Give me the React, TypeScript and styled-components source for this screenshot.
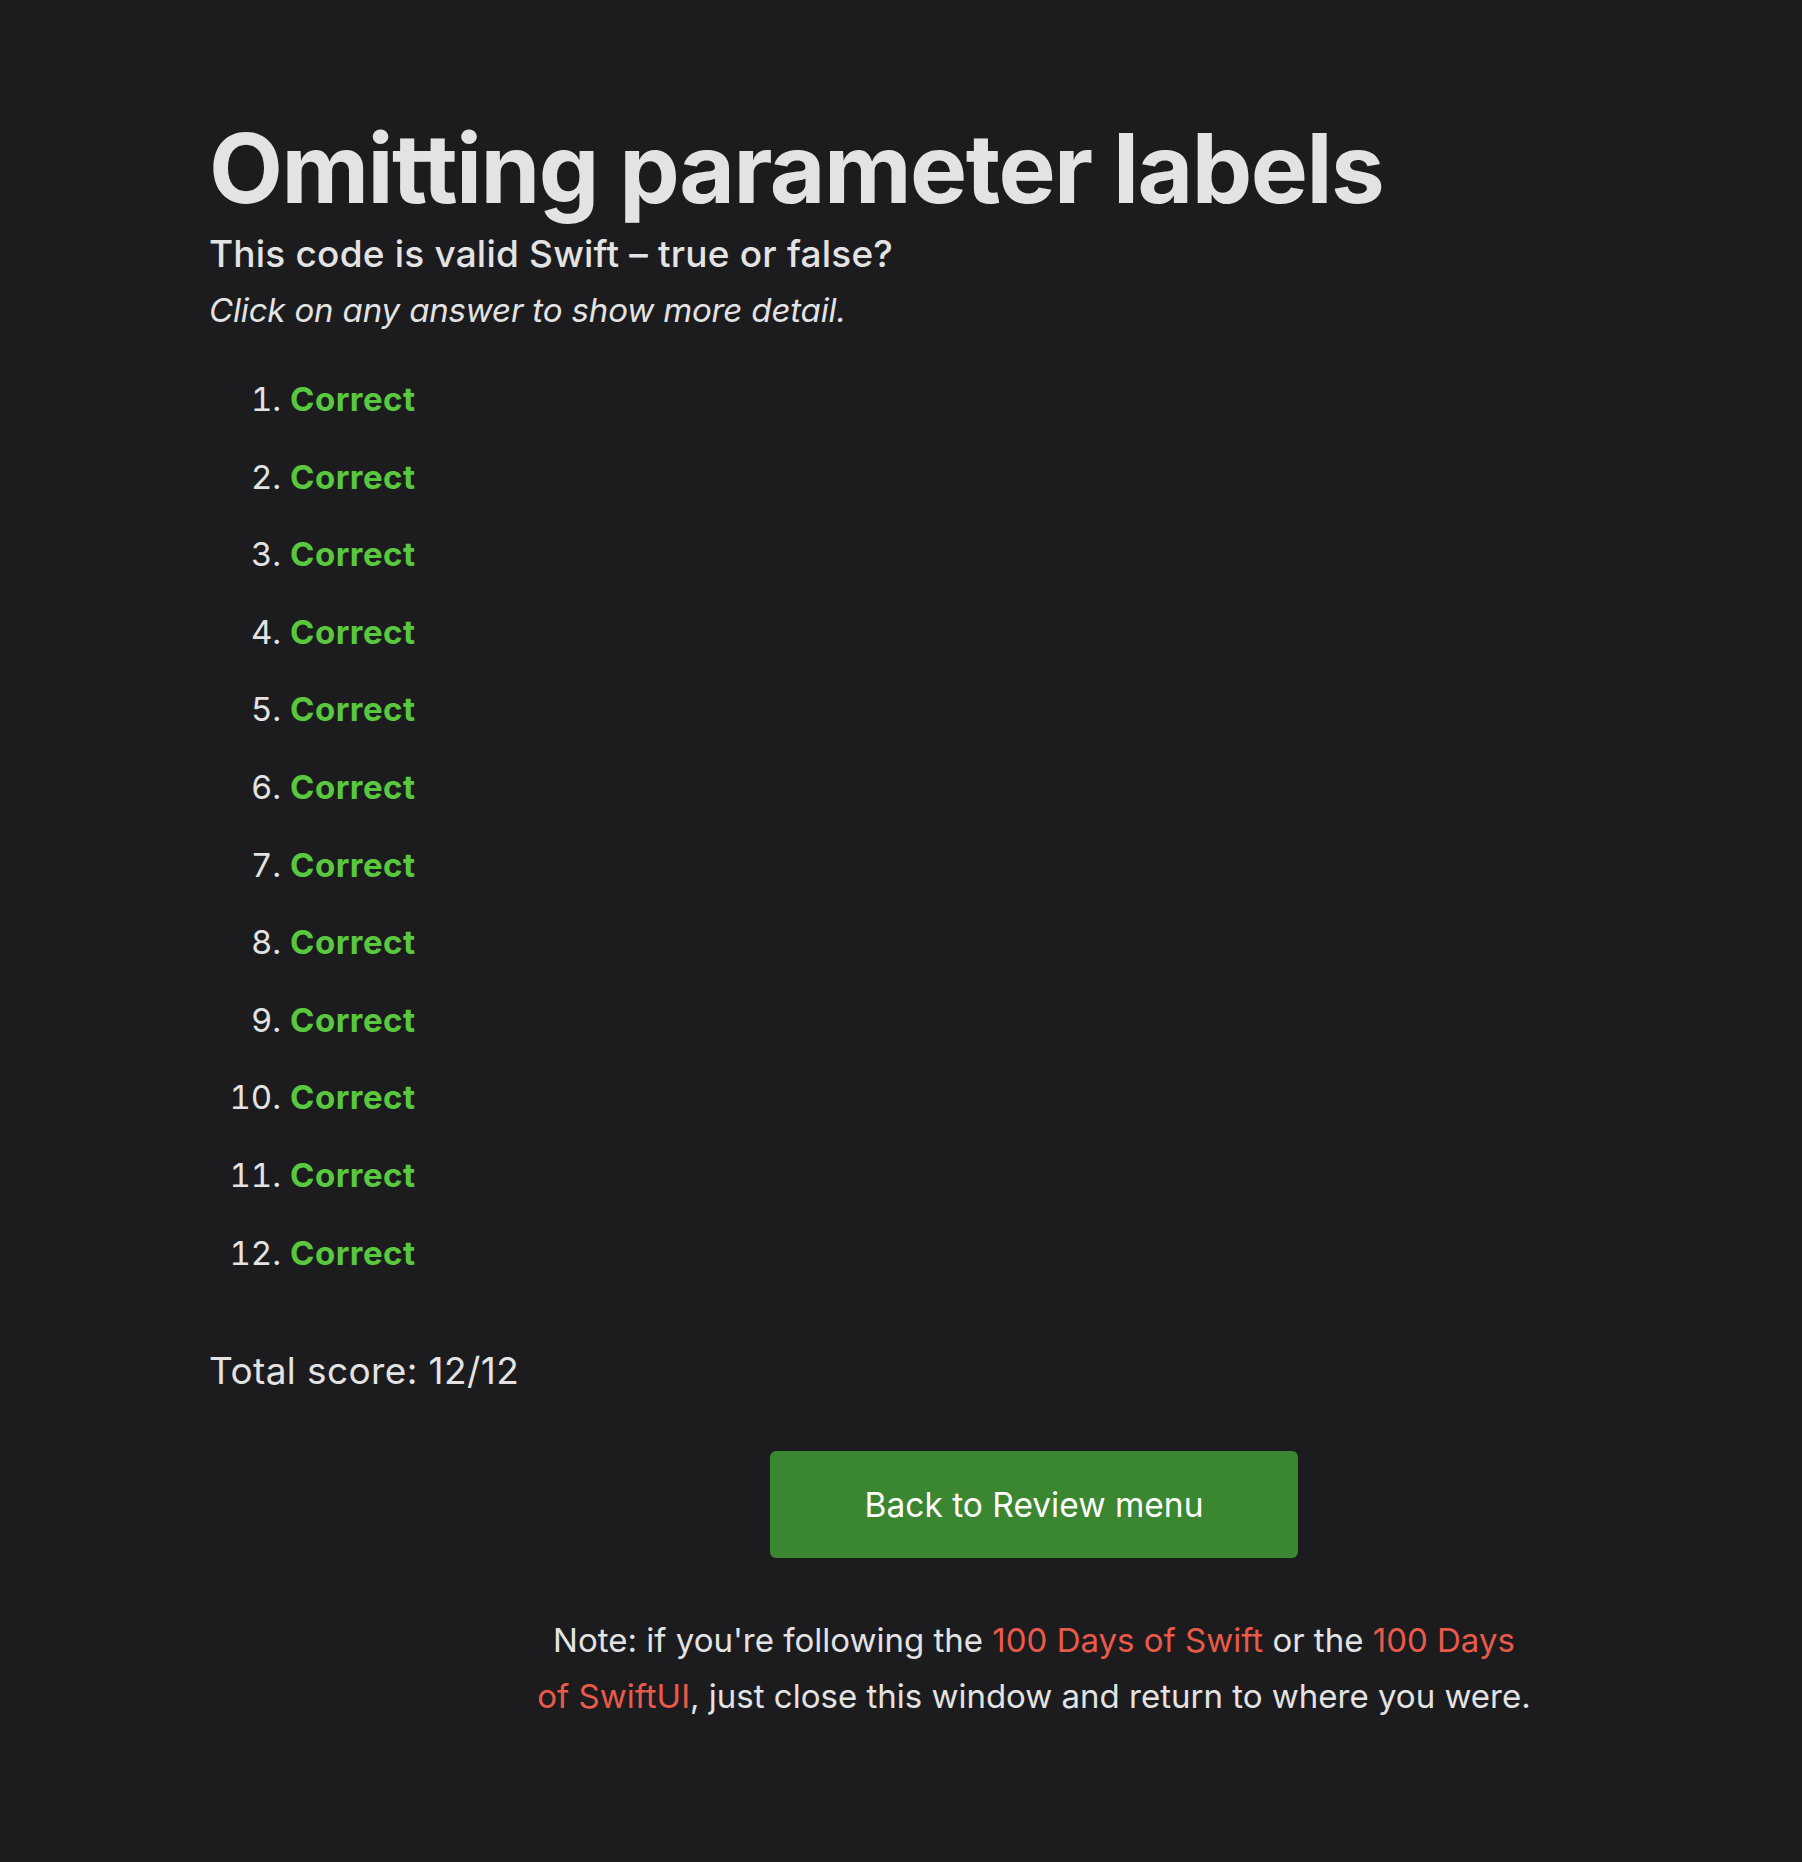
import React from 'react';
import styled, { createGlobalStyle } from 'styled-components';

const GlobalStyle = createGlobalStyle`
  html, body {
    margin: 0;
    padding: 0;
    background-color: #1c1c1e;
  }
  body {
    font-family: Inter, "Noto Sans", "Liberation Sans", sans-serif;
    color: #e3e3e4;
  }
`;

const Page = styled.div`
  min-height: 1862px;
  box-sizing: border-box;
  padding: 120px 0 0 209px;
  display: flex;
  flex-direction: column;
`;

const Title = styled.h1`
  margin: 0;
  font-size: 96px;
  line-height: 96px;
  font-weight: 700;
  letter-spacing: -1.5px;
  color: #e3e3e4;
`;

const Subtitle = styled.p`
  margin: 16px 0 0 0;
  font-size: 37px;
  line-height: 43px;
  font-weight: 500;
  letter-spacing: 0.2px;
`;

const Hint = styled.p`
  margin: 15px 0 0 0;
  font-size: 33px;
  line-height: 40px;
  font-style: italic;
  letter-spacing: -0.15px;
`;

const AnswerList = styled.ol`
  margin: 31px 0 0 0;
  padding-left: 81px;
`;

const Answer = styled.li`
  font-size: 33px;
  line-height: 77.6px;
  cursor: pointer;

  &::marker {
    color: #e3e3e4;
  }
`;

const Result = styled.span<{ $correct: boolean }>`
  font-weight: 700;
  letter-spacing: 0.5px;
  color: ${p => (p.$correct ? '#5ac83e' : '#eb5545')};
`;

const Score = styled.p`
  margin: 57px 0 0 0;
  font-size: 37px;
  line-height: 44px;
  letter-spacing: 0.4px;
`;

const Footer = styled.div`
  width: 1000px;
  margin: 58px 0 0 325px;
  display: flex;
  flex-direction: column;
  align-items: center;
`;

const BackButton = styled.button`
  width: 528px;
  height: 107px;
  border: none;
  border-radius: 6px;
  background-color: #3b8630;
  color: #ffffff;
  font-family: Inter, "Noto Sans", sans-serif;
  font-size: 33.5px;
  cursor: pointer;
`;

const Note = styled.p`
  margin: 54px 0 0 0;
  font-size: 33px;
  line-height: 56px;
  text-align: center;
`;

const Link = styled.a`
  color: #e95a4a;
  text-decoration: none;
`;

const answers = Array.from({ length: 12 }, () => true);

const App: React.FC = () => {
  return (
    <Page>
      <GlobalStyle />
      <Title>Omitting parameter labels</Title>
      <Subtitle>This code is valid Swift – true or false?</Subtitle>
      <Hint>Click on any answer to show more detail.</Hint>
      <AnswerList>
        {answers.map((ok, i) => (
          <Answer key={i}>
            <Result $correct={ok}>{ok ? 'Correct' : 'Wrong'}</Result>
          </Answer>
        ))}
      </AnswerList>
      <Score>Total score: 12/12</Score>
      <Footer>
        <BackButton>Back to Review menu</BackButton>
        <Note>
          Note: if you're following the <Link href="#">100 Days of Swift</Link> or the{' '}
          <Link href="#">100 Days of SwiftUI</Link>, just close this window and return to where
          you were.
        </Note>
      </Footer>
    </Page>
  );
};

export default App;
